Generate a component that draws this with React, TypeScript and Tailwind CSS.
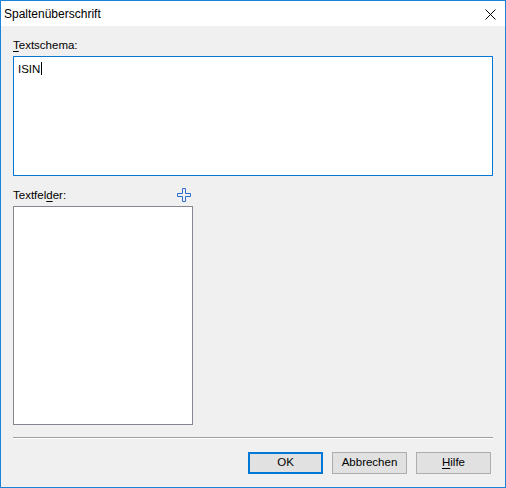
const font = { fontFamily: '"Liberation Sans", "Noto Sans", sans-serif' };

function Button({
  children,
  primary,
}: {
  children: React.ReactNode;
  primary?: boolean;
}) {
  return (
    <button
      type="button"
      className={`flex h-[22px] w-[75px] items-center justify-center bg-[#e1e1e1] text-[11.5px] leading-none text-black ${
        primary ? "border-2 border-[#0078d7]" : "border border-[#adadad]"
      }`}
    >
      {children}
    </button>
  );
}

export default function App() {
  return (
    <div
      className="flex h-[488px] w-[506px] flex-col border border-[#1883d7] bg-[#f0f0f0] text-black"
      style={font}
    >
      <div className="flex h-[25px] items-center justify-between bg-white pl-[3px] pr-[9px]">
        <span className="text-[12px]">Spaltenüberschrift</span>
        <svg width="11" height="11" viewBox="0 0 11 11" className="mt-[1px]">
          <path d="M0.5 0.5 L10.5 10.5 M10.5 0.5 L0.5 10.5" stroke="#000" strokeWidth="1" />
        </svg>
      </div>

      <div className="flex flex-1 flex-col px-[12px] pt-[12px] text-[11.5px]">
        <label className="h-[15px] leading-[15px]">
          <span className="underline underline-offset-2">T</span>extschema:
        </label>
        <div className="mt-[3px] h-[120px] border border-[#0078d7] bg-white px-[4px] pt-[3px] leading-[15px]">
          ISIN<span className="ml-[1px] inline-block h-[13px] w-[1px] translate-y-[2px] bg-black" />
        </div>

        <div className="mt-[12px] flex h-[15px] w-[180px] items-start justify-between">
          <label className="leading-[15px]">
            Textfel<span className="underline underline-offset-2">d</span>er:
          </label>
          <svg width="14" height="14" viewBox="0 0 14 14" className="mr-[2px]">
            <path
              d="M5.5 0.5 H8.5 V5.5 H13.5 V8.5 H8.5 V13.5 H5.5 V8.5 H0.5 V5.5 H5.5 Z"
              fill="none"
              stroke="#2b6fd0"
              strokeWidth="1"
            />
          </svg>
        </div>
        <div className="mt-[3px] h-[219px] w-[180px] border border-[#828790] bg-white" />

        <div className="mt-[12px] h-[2px] border-t border-[#a0a0a0] border-b border-b-white" />

        <div className="mt-[13px] flex justify-end gap-[9px] pr-[2px]">
          <Button primary>OK</Button>
          <Button>Abbrechen</Button>
          <Button>
            <span>
              <span className="underline underline-offset-2">H</span>ilfe
            </span>
          </Button>
        </div>
      </div>
    </div>
  );
}
